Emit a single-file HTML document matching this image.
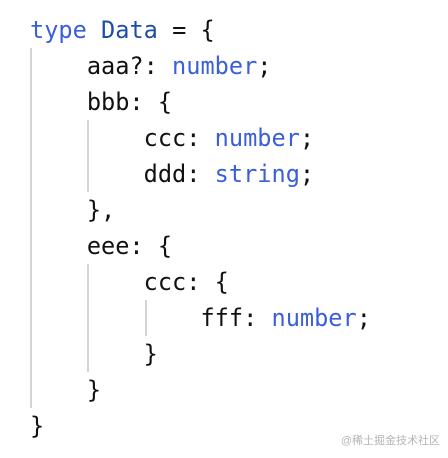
<!DOCTYPE html>
<html><head><style>
html,body{margin:0;padding:0;background:#fff;width:448px;height:458px;overflow:hidden;position:relative}
.l{position:absolute;left:30px;font-family:"DejaVu Sans Mono","Liberation Mono",monospace;font-size:23.6px;line-height:36px;color:#111;white-space:pre}
.k{color:#3a5fd8}.t{color:#1f4ea6}.b{color:#3a5fd8}
.g{position:absolute;width:2px;background:#d4d4d4}
.w{position:absolute;right:8px;top:432px;font-family:"Liberation Sans","Noto Sans CJK SC",sans-serif;font-size:11px;color:#b5b5b5}
</style></head><body>
<div class="g" style="left:30px;top:48px;height:360px"></div>
<div class="g" style="left:87px;top:120px;height:72px"></div>
<div class="g" style="left:87px;top:264px;height:108px"></div>
<div class="g" style="left:145px;top:300px;height:36px"></div>
<div class="l" style="top:12px"><span class="k">type</span> <span class="t">Data</span> = {</div>
<div class="l" style="top:48px">    aaa?: <span class="b">number</span>;</div>
<div class="l" style="top:84px">    bbb: {</div>
<div class="l" style="top:120px">        ccc: <span class="b">number</span>;</div>
<div class="l" style="top:156px">        ddd: <span class="b">string</span>;</div>
<div class="l" style="top:192px">    },</div>
<div class="l" style="top:228px">    eee: {</div>
<div class="l" style="top:264px">        ccc: {</div>
<div class="l" style="top:300px">            fff: <span class="b">number</span>;</div>
<div class="l" style="top:336px">        }</div>
<div class="l" style="top:372px">    }</div>
<div class="l" style="top:408px">}</div>
<div class="w">@稀土掘金技术社区</div>
</body></html>
